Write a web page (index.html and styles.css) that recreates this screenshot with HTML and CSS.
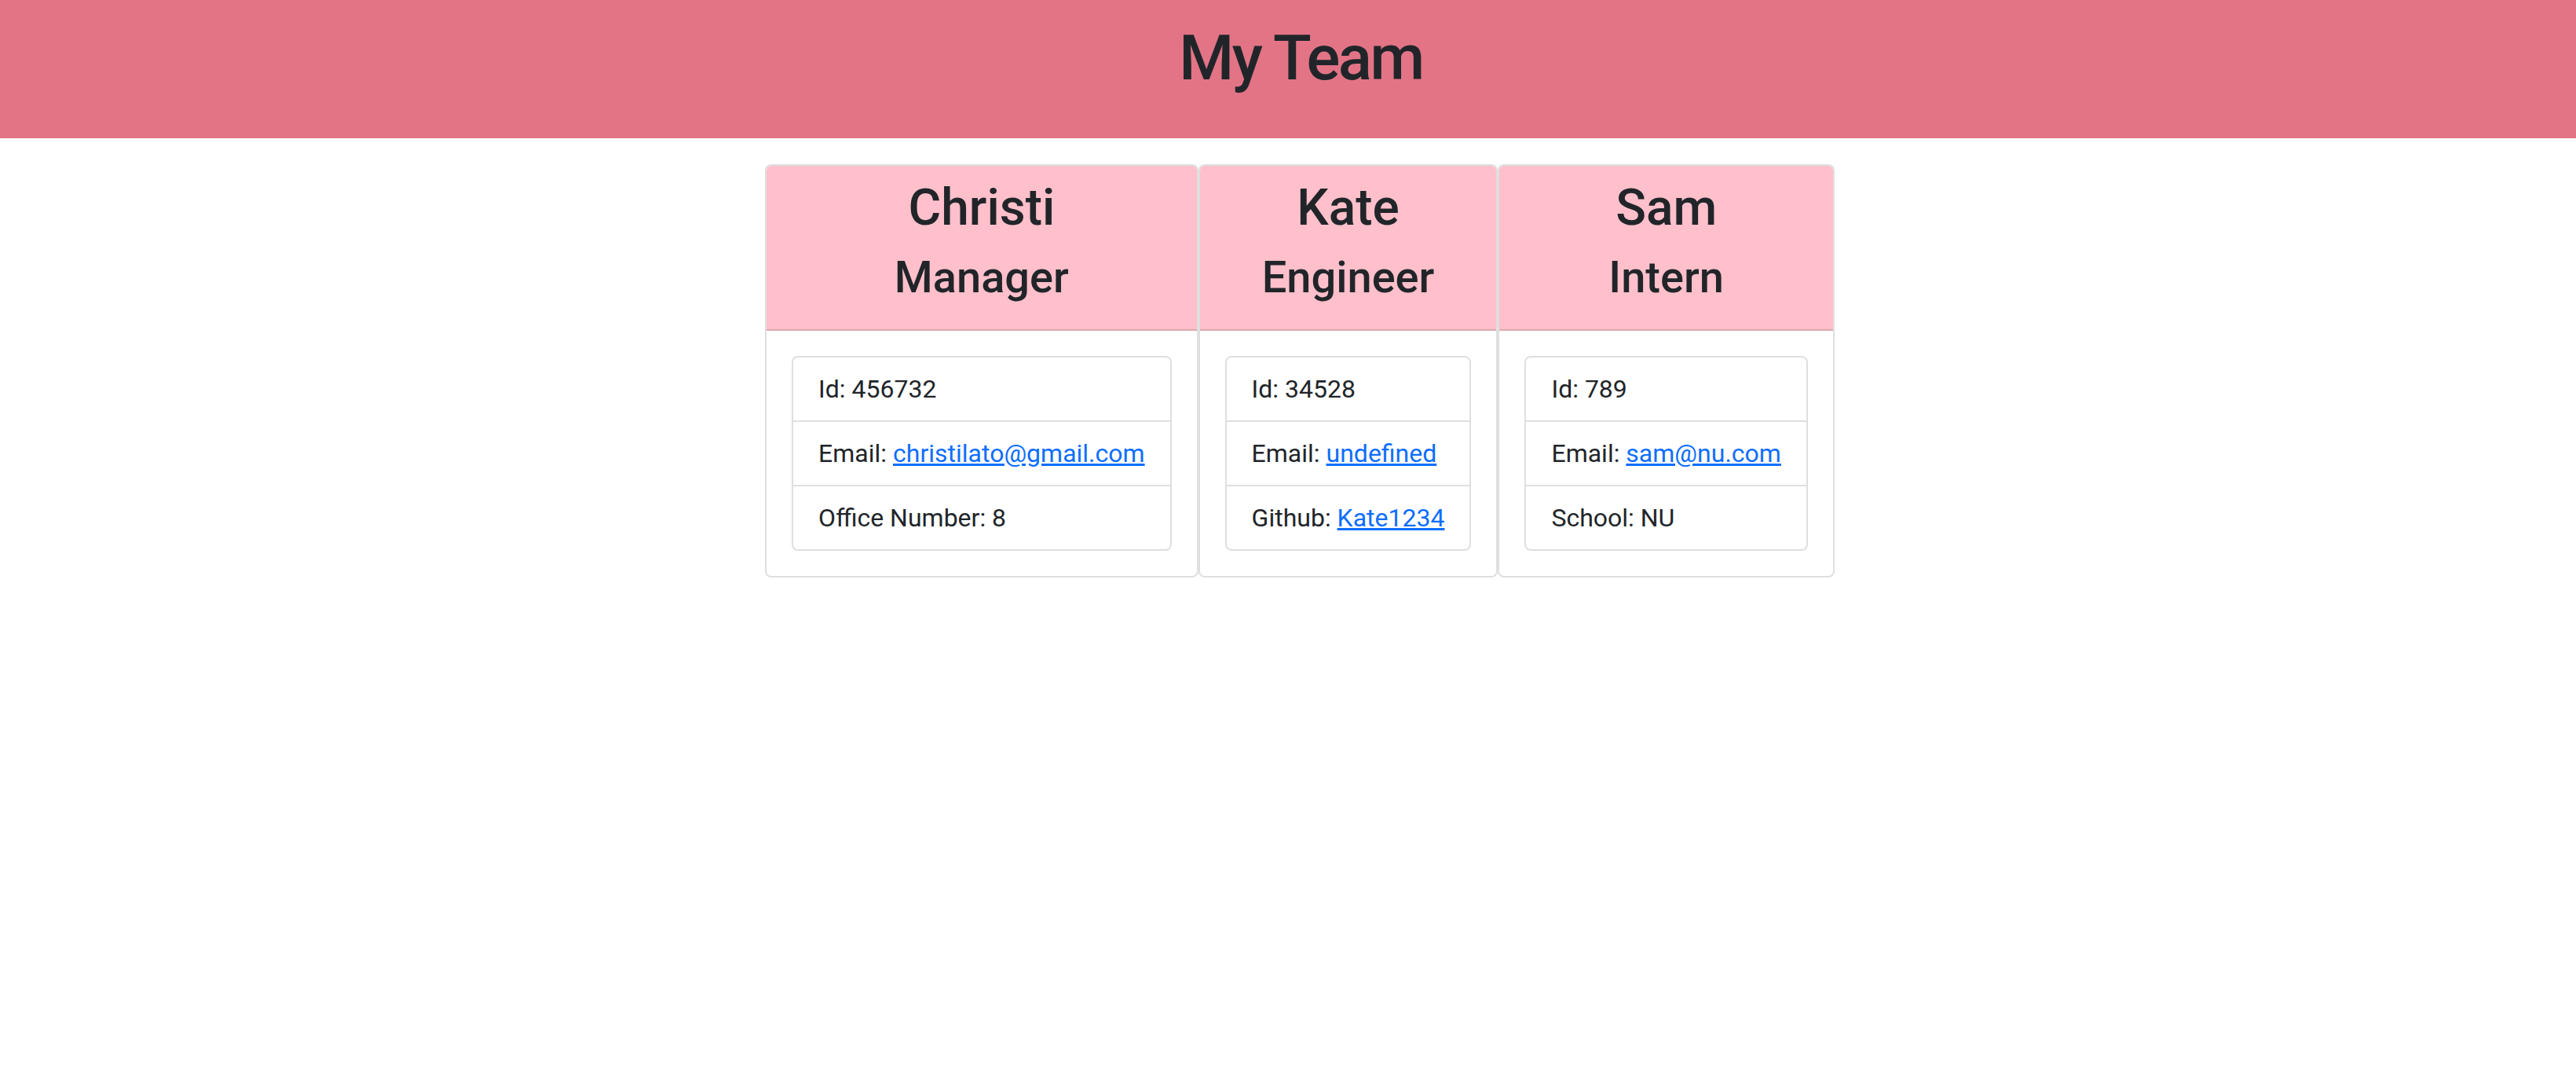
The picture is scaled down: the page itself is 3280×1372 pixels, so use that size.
FILE: index.html
```html
<!DOCTYPE html>
<html lang="en">
<head>
<meta charset="utf-8">
<title>My Team</title>
<link rel="stylesheet" href="styles.css">
</head>
<body>
<header class="banner">
  <h1 class="banner-title">My Team</h1>
</header>
<main class="team">
  <div class="card">
    <div class="card-header">
      <h2 class="card-name">Christi</h2>
      <h3 class="card-role">Manager</h3>
    </div>
    <div class="card-body">
      <ul class="info-list">
        <li class="info-item">Id: 456732</li>
        <li class="info-item">Email: <a class="info-link" href="#">christilato@gmail.com</a></li>
        <li class="info-item">Office Number: 8</li>
      </ul>
    </div>
  </div>
  <div class="card">
    <div class="card-header">
      <h2 class="card-name">Kate</h2>
      <h3 class="card-role">Engineer</h3>
    </div>
    <div class="card-body">
      <ul class="info-list">
        <li class="info-item">Id: 34528</li>
        <li class="info-item">Email: <a class="info-link" href="#">undefined</a></li>
        <li class="info-item">Github: <a class="info-link" href="#">Kate1234</a></li>
      </ul>
    </div>
  </div>
  <div class="card">
    <div class="card-header">
      <h2 class="card-name">Sam</h2>
      <h3 class="card-role">Intern</h3>
    </div>
    <div class="card-body">
      <ul class="info-list">
        <li class="info-item">Id: 789</li>
        <li class="info-item">Email: <a class="info-link" href="#">sam@nu.com</a></li>
        <li class="info-item">School: NU</li>
      </ul>
    </div>
  </div>
</main>
</body>
</html>
```

FILE: styles.css
```css
* {
  box-sizing: border-box;
}

body {
  margin: 0;
  font-family: Roboto, "Liberation Sans", Arial, sans-serif;
  font-size: 32px;
  line-height: 1.5;
  color: #212529;
  background: #ffffff;
}

.banner {
  background: #e27486;
  padding: 26px 0 54px 33px;
  text-align: center;
}

.banner-title {
  margin: 0;
  font-size: 80px;
  font-weight: 500;
  line-height: 1.2;
  letter-spacing: -2.5px;
}

.team {
  display: flex;
  justify-content: center;
  align-items: flex-start;
  padding: 33px 0 0 30px;
}

.card {
  display: flex;
  flex-direction: column;
  background: #ffffff;
  border: 2px solid rgba(0, 0, 0, 0.125);
  border-radius: 8px;
}

.card-header {
  padding: 16px 32px;
  background: #ffc0cb;
  border-bottom: 2px solid rgba(0, 0, 0, 0.125);
  border-radius: 6px 6px 0 0;
  text-align: center;
}

.card-name {
  margin: 0 0 16px;
  font-size: 64px;
  font-weight: 500;
  line-height: 1.2;
}

.card-role {
  margin: 0 0 16px;
  font-size: 56px;
  font-weight: 500;
  line-height: 1.2;
}

.card-body {
  padding: 32px;
}

.info-list {
  margin: 0;
  padding: 0;
  list-style: none;
  border: 2px solid rgba(0, 0, 0, 0.125);
  border-radius: 8px;
}

.info-item {
  padding: 16px 32px;
  white-space: nowrap;
}

.info-item + .info-item {
  border-top: 2px solid rgba(0, 0, 0, 0.125);
}

.info-link {
  color: #0d6efd;
  text-decoration: underline;
}
```
